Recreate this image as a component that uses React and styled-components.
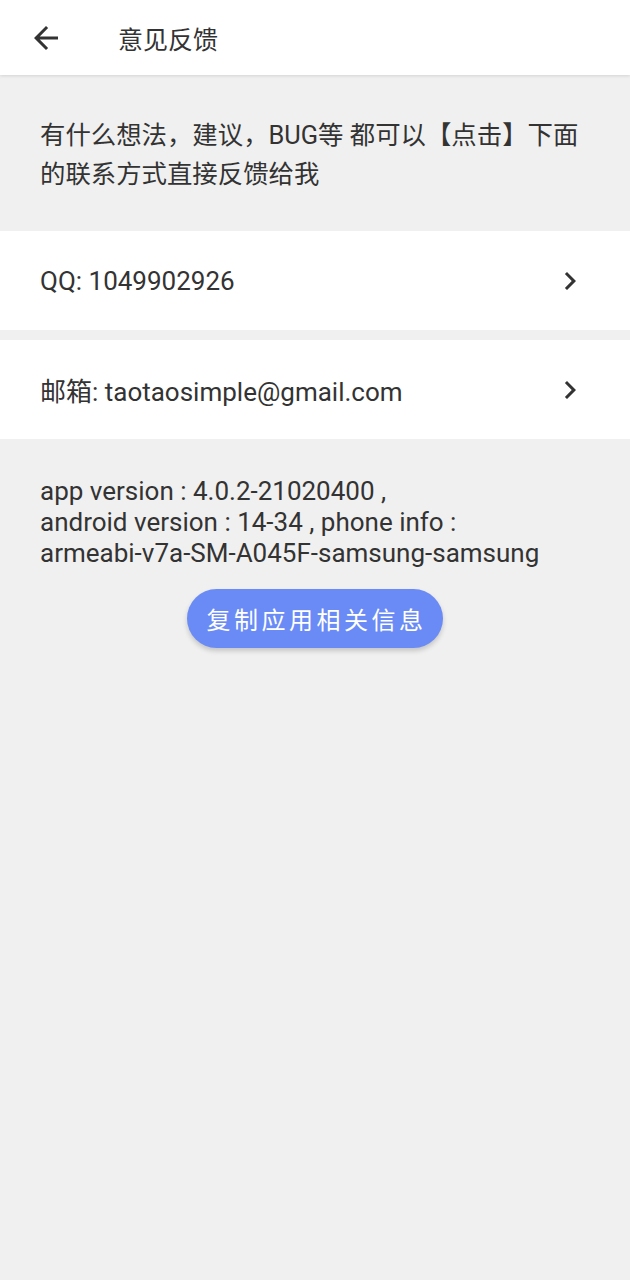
import React from 'react'
import styled, { createGlobalStyle } from 'styled-components'

const GlobalStyle = createGlobalStyle`
    html, body {
        margin: 0;
        padding: 0;
        background: #f0f0f0;
    }
    body {
        font-family: Roboto, "Noto Sans CJK SC", sans-serif;
        color: #333;
    }
`

const Page = styled.div`
    min-height: 1280px;
    background: #f0f0f0;
    display: flex;
    flex-direction: column;
`

const Header = styled.header`
    height: 75px;
    background: #fff;
    display: flex;
    align-items: center;
    box-shadow: 0 1px 3px rgba(0, 0, 0, 0.12);
    position: relative;
    z-index: 1;
`

const BackBtn = styled.button`
    border: none;
    background: none;
    padding: 0;
    margin-left: 28px;
    width: 36px;
    height: 36px;
    display: flex;
    align-items: center;
    justify-content: center;
    color: #333;
    cursor: pointer;
`

const Title = styled.h1`
    margin: 0 0 0 54px;
    font-size: 25px;
    font-weight: 400;
    color: #333;
    font-family: "Noto Sans CJK SC", sans-serif;
`

const Intro = styled.p`
    margin: 0;
    padding: 41px 40px 37px;
    font-size: 25.4px;
    line-height: 39px;
    font-family: Roboto, "Noto Sans CJK SC", sans-serif;
`

const List = styled.div`
    display: flex;
    flex-direction: column;
    gap: 10px;
`

const Row = styled.div`
    height: 99px;
    background: #fff;
    display: flex;
    align-items: center;
    justify-content: space-between;
    padding: 0 42px 0 40px;
    font-size: 26px;
    cursor: pointer;
`

const Info = styled.div`
    margin: 37px 40px 0;
    font-size: 26px;
    line-height: 31px;
`

const CopyBtn = styled.button`
    align-self: center;
    margin-top: 20px;
    width: 256px;
    height: 59px;
    border: none;
    border-radius: 30px;
    background: #6a8bf5;
    color: #fff;
    font-family: "Noto Sans CJK SC", sans-serif;
    font-size: 24px;
    letter-spacing: 3.5px;
    padding: 0 0 0 3px;
    box-shadow: 0 3px 5px rgba(0, 0, 0, 0.18);
    cursor: pointer;
`

function Arrow() {
    return (
        <svg width="36" height="36" viewBox="0 0 24 24" fill="currentColor">
            <path d="M20 11H7.83l5.59-5.59L12 4l-8 8 8 8 1.41-1.41L7.83 13H20v-2z" />
        </svg>
    )
}

function Chevron() {
    return (
        <svg width="36" height="36" viewBox="0 0 24 24" fill="#333">
            <path d="M10 6L8.59 7.41 13.17 12l-4.58 4.59L10 18l6-6z" />
        </svg>
    )
}

const contacts = [
    { label: 'QQ: 1049902926' },
    { label: '邮箱: taotaosimple@gmail.com' },
]

export default function App() {
    return (
        <Page>
            <GlobalStyle />
            <Header>
                <BackBtn aria-label="back"><Arrow /></BackBtn>
                <Title>意见反馈</Title>
            </Header>
            <Intro>有什么想法，建议，BUG等 都可以【点击】下面的联系方式直接反馈给我</Intro>
            <List>
                {contacts.map(c => (
                    <Row key={c.label}>
                        <span>{c.label}</span>
                        <Chevron />
                    </Row>
                ))}
            </List>
            <Info>
                app version : 4.0.2-21020400 ,<br />
                android version : 14-34 , phone info :<br />
                armeabi-v7a-SM-A045F-samsung-samsung
            </Info>
            <CopyBtn>复制应用相关信息</CopyBtn>
        </Page>
    )
}
